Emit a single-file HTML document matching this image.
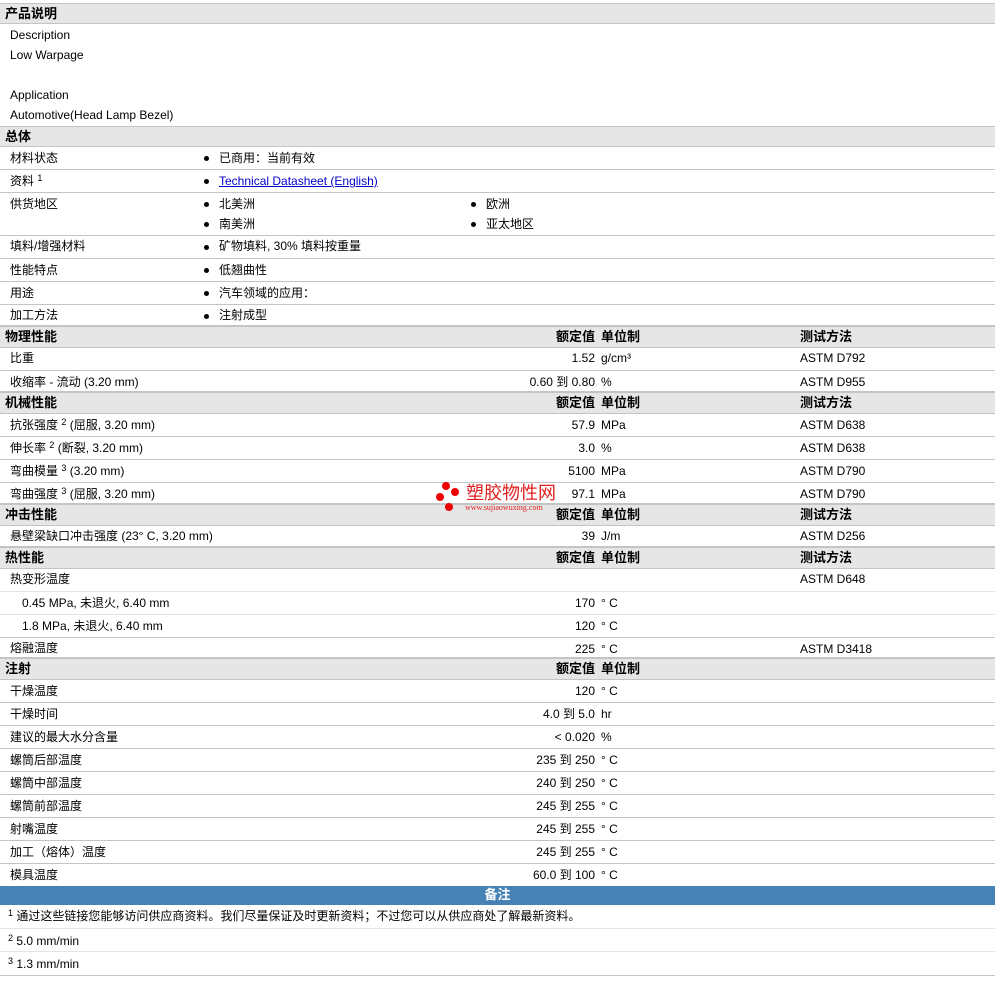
<!DOCTYPE html>
<html><head><meta charset="utf-8"><style>
body{margin:0;width:995px;height:997px;background:#fff;position:relative;overflow:hidden;font-family:"Liberation Sans","Noto Sans CJK SC",sans-serif;font-size:12px;color:#000}
.r{position:absolute;left:0;width:995px;border-bottom:1px solid #c4c4c4;box-sizing:border-box}
.l{border-bottom-color:#e4e4e4}
.h{background:#e6e6e6;font-weight:bold;font-size:13px;border-top:1px solid #c4c4c4}
.r span{position:absolute;white-space:nowrap}
.a{left:10px}.h .a{left:5px}
.b{left:219px}.b2{left:486px}
.b::before,.b2::before{content:"";position:absolute;left:-15px;top:50%;width:5px;height:5px;margin-top:-2px;border-radius:50%;background:#000}
.v{right:400px;text-align:right}
.u{left:601px}.t{left:800px}
sup{font-size:9px;vertical-align:baseline;line-height:1;position:relative;top:-4px}
a{color:#00c;text-decoration:underline}
</style></head><body>

<div class="r h" style="top:3px;height:21px;line-height:19px"><span class="a">产品说明</span></div>
<div style="position:absolute;left:10px;top:25px;line-height:20px">Description<br>Low Warpage<br><br>Application<br>Automotive(Head Lamp Bezel)</div>
<div class="r h" style="top:126px;height:21px;line-height:19px"><span class="a">总体</span></div>
<div class="r" style="top:147px;height:23px;line-height:22px"><span class="a">材料状态</span><span class="b">已商用：当前有效</span></div>
<div class="r" style="top:170px;height:23px;line-height:22px"><span class="a">资料 <sup>1</sup></span><span class="b"><a>Technical Datasheet (English)</a></span></div>
<div class="r" style="top:193px;height:43px;line-height:20px"><span class="a" style="top:1px">供货地区</span><span class="b" style="top:1px">北美洲</span><span class="b2" style="top:1px">欧洲</span><span class="b" style="top:21px">南美洲</span><span class="b2" style="top:21px">亚太地区</span></div>
<div class="r" style="top:236px;height:23px;line-height:21px"><span class="a">填料/增强材料</span><span class="b">矿物填料, 30% 填料按重量</span></div>
<div class="r" style="top:259px;height:23px;line-height:22px"><span class="a">性能特点</span><span class="b">低翘曲性</span></div>
<div class="r" style="top:282px;height:23px;line-height:22px"><span class="a">用途</span><span class="b">汽车领域的应用：</span></div>
<div class="r" style="top:305px;height:21px;line-height:21px"><span class="a">加工方法</span><span class="b">注射成型</span></div>

<div class="r h" style="top:326px;height:22px;line-height:20px"><span class="a">物理性能</span><span class="v">额定值</span><span class="u">单位制</span><span class="t">测试方法</span></div>
<div class="r" style="top:348px;height:23px;line-height:21px"><span class="a">比重</span><span class="v">1.52</span><span class="u">g/cm³</span><span class="t">ASTM D792</span></div>
<div class="r" style="top:371px;height:21px;line-height:22px"><span class="a">收缩率 - 流动 (3.20 mm)</span><span class="v">0.60 到 0.80</span><span class="u">%</span><span class="t">ASTM D955</span></div>

<div class="r h" style="top:392px;height:22px;line-height:20px"><span class="a">机械性能</span><span class="v">额定值</span><span class="u">单位制</span><span class="t">测试方法</span></div>
<div class="r" style="top:414px;height:23px;line-height:22px"><span class="a">抗张强度 <sup>2</sup> (屈服, 3.20 mm)</span><span class="v">57.9</span><span class="u">MPa</span><span class="t">ASTM D638</span></div>
<div class="r" style="top:437px;height:23px;line-height:22px"><span class="a">伸长率 <sup>2</sup> (断裂, 3.20 mm)</span><span class="v">3.0</span><span class="u">%</span><span class="t">ASTM D638</span></div>
<div class="r" style="top:460px;height:23px;line-height:22px"><span class="a">弯曲模量 <sup>3</sup> (3.20 mm)</span><span class="v">5100</span><span class="u">MPa</span><span class="t">ASTM D790</span></div>
<div class="r" style="top:483px;height:21px;line-height:22px"><span class="a">弯曲强度 <sup>3</sup> (屈服, 3.20 mm)</span><span class="v">97.1</span><span class="u">MPa</span><span class="t">ASTM D790</span></div>

<div class="r h" style="top:504px;height:22px;line-height:20px"><span class="a">冲击性能</span><span class="v">额定值</span><span class="u">单位制</span><span class="t">测试方法</span></div>
<div class="r" style="top:526px;height:21px;line-height:21px"><span class="a">悬壁梁缺口冲击强度 (23° C, 3.20 mm)</span><span class="v">39</span><span class="u">J/m</span><span class="t">ASTM D256</span></div>

<div class="r h" style="top:547px;height:22px;line-height:20px"><span class="a">热性能</span><span class="v">额定值</span><span class="u">单位制</span><span class="t">测试方法</span></div>
<div class="r l" style="top:569px;height:23px;line-height:20px"><span class="a">热变形温度</span><span class="t">ASTM D648</span></div>
<div class="r l" style="top:592px;height:23px;line-height:22px"><span style="left:22px">0.45 MPa, 未退火, 6.40 mm</span><span class="v">170</span><span class="u">° C</span></div>
<div class="r" style="top:615px;height:23px;line-height:22px"><span style="left:22px">1.8 MPa, 未退火, 6.40 mm</span><span class="v">120</span><span class="u">° C</span></div>
<div class="r" style="top:638px;height:20px;line-height:20px"><span class="a">熔融温度</span><span class="v" style="top:1px">225</span><span class="u" style="top:1px">° C</span><span class="t" style="top:1px">ASTM D3418</span></div>

<div class="r h" style="top:658px;height:22px;line-height:20px"><span class="a">注射</span><span class="v">额定值</span><span class="u">单位制</span></div>
<div class="r" style="top:680px;height:23px;line-height:22px"><span class="a">干燥温度</span><span class="v">120</span><span class="u">° C</span></div>
<div class="r" style="top:703px;height:23px;line-height:22px"><span class="a">干燥时间</span><span class="v">4.0 到 5.0</span><span class="u">hr</span></div>
<div class="r" style="top:726px;height:23px;line-height:22px"><span class="a">建议的最大水分含量</span><span class="v">&lt; 0.020</span><span class="u">%</span></div>
<div class="r" style="top:749px;height:23px;line-height:22px"><span class="a">螺筒后部温度</span><span class="v">235 到 250</span><span class="u">° C</span></div>
<div class="r" style="top:772px;height:23px;line-height:22px"><span class="a">螺筒中部温度</span><span class="v">240 到 250</span><span class="u">° C</span></div>
<div class="r" style="top:795px;height:23px;line-height:22px"><span class="a">螺筒前部温度</span><span class="v">245 到 255</span><span class="u">° C</span></div>
<div class="r" style="top:818px;height:23px;line-height:22px"><span class="a">射嘴温度</span><span class="v">245 到 255</span><span class="u">° C</span></div>
<div class="r" style="top:841px;height:23px;line-height:22px"><span class="a">加工（熔体）温度</span><span class="v">245 到 255</span><span class="u">° C</span></div>
<div class="r" style="top:864px;height:22px;line-height:22px;border-bottom:none"><span class="a">模具温度</span><span class="v">60.0 到 100</span><span class="u">° C</span></div>

<div style="position:absolute;top:886px;left:0;width:995px;height:19px;background:#4682b4;color:#fff;font-weight:bold;font-size:13px;text-align:center;line-height:17px">备注</div>
<div class="r l" style="top:905px;height:24px;line-height:22px"><span style="left:8px"><sup>1</sup> 通过这些链接您能够访问供应商资料。我们尽量保证及时更新资料；不过您可以从供应商处了解最新资料。</span></div>
<div class="r l" style="top:929px;height:23px;line-height:24px"><span style="left:8px"><sup>2</sup> 5.0 mm/min</span></div>
<div class="r" style="top:952px;height:24px;line-height:24px"><span style="left:8px"><sup>3</sup> 1.3 mm/min</span></div>

<div style="position:absolute;left:436px;top:482px;width:60px;height:34px">
<div style="position:absolute;left:6px;top:0;width:8px;height:8px;border-radius:50%;background:#e00"></div>
<div style="position:absolute;left:15px;top:6px;width:8px;height:8px;border-radius:50%;background:#e00"></div>
<div style="position:absolute;left:0;top:11px;width:8px;height:8px;border-radius:50%;background:#e00"></div>
<div style="position:absolute;left:9px;top:21px;width:8px;height:8px;border-radius:50%;background:#e00"></div>
</div>
<div style="position:absolute;left:466px;top:481px;color:#e02020;font-size:18px;line-height:22px;font-family:'Noto Sans CJK SC',sans-serif">塑胶物性网</div>
<div style="position:absolute;left:465px;top:503px;color:#e02020;font-size:8px;font-family:'Liberation Serif',serif">www.sujiaowuxing.com</div>
</body></html>
